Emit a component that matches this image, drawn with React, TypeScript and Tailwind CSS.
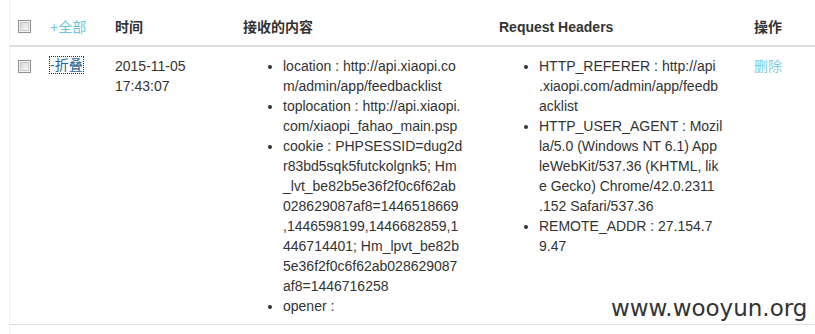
import React from "react";

const Check = () => (
  <div className="w-[13px] h-[13px] border border-[#8f8f8f] bg-[#f4f4f4] p-[1px]">
    <div className="w-full h-full border border-[#c8c8c8] bg-gradient-to-br from-[#d6d6d6] to-[#f8f8f8]" />
  </div>
);

const Lines = ({ lines }: { lines: string[] }) => (
  <>
    {lines.map((l, i) => (
      <div key={i} className="whitespace-pre">
        {l}
      </div>
    ))}
  </>
);

const col4: string[][] = [
  ["location : http://api.xiaopi.co", "m/admin/app/feedbacklist"],
  ["toplocation : http://api.xiaopi.", "com/xiaopi_fahao_main.psp"],
  [
    "cookie : PHPSESSID=dug2d",
    "r83bd5sqk5futckolgnk5; Hm",
    "_lvt_be82b5e36f2f0c6f62ab",
    "028629087af8=1446518669",
    ",1446598199,1446682859,1",
    "446714401; Hm_lpvt_be82b",
    "5e36f2f0c6f62ab028629087",
    "af8=1446716258",
  ],
  ["opener : "],
];

const col5: string[][] = [
  ["HTTP_REFERER : http://api", ".xiaopi.com/admin/app/feedb", "acklist"],
  [
    "HTTP_USER_AGENT : Mozil",
    "la/5.0 (Windows NT 6.1) App",
    "leWebKit/537.36 (KHTML, lik",
    "e Gecko) Chrome/42.0.2311",
    ".152 Safari/537.36",
  ],
  ["REMOTE_ADDR : 27.154.7", "9.47"],
];

const List = ({ items }: { items: string[][] }) => (
  <ul className="list-disc pl-[40px] m-0">
    {items.map((it, i) => (
      <li key={i}>
        <Lines lines={it} />
      </li>
    ))}
  </ul>
);

export default function App() {
  return (
    <div
      className="relative w-[815px] h-[334px] bg-white overflow-hidden text-[14px] leading-[20px] text-[#333]"
      style={{ fontFamily: '"Liberation Sans", Arial, "Noto Sans CJK SC", sans-serif' }}
    >
      <div className="absolute left-[9px] top-0 bottom-0 w-px bg-[#f2f2f2]" />
      <div className="ml-[10px] pt-[9px]">
        <div className="grid grid-cols-[32px_65px_128px_256px_255px_1fr] border-b-2 border-[#ddd]">
          <div className="p-2 pt-[11px] pb-[8px]">
            <Check />
          </div>
          <div className="p-2 text-[#6cc6dc]">+全部</div>
          <div className="p-2 font-bold">时间</div>
          <div className="p-2 font-bold">接收的内容</div>
          <div className="p-2 font-bold">Request Headers</div>
          <div className="p-2 font-bold">操作</div>
        </div>
        <div className="grid grid-cols-[32px_65px_128px_256px_255px_1fr] border-b border-[#ddd]">
          <div className="p-2 pt-[13px]">
            <Check />
          </div>
          <div className="p-2">
            <span className="text-[#2a6496] outline-1 outline-dotted outline-[#333] outline-offset-0">-折叠</span>
          </div>
          <div className="p-2 pt-[9px]">
            <div>2015-11-05</div>
            <div>17:43:07</div>
          </div>
          <div className="p-2 pt-[9px]">
            <List items={col4} />
          </div>
          <div className="p-2 pt-[9px]">
            <List items={col5} />
          </div>
          <div className="p-2 pt-[9px]">
            <span className="text-[#7ccde0]">删除</span>
          </div>
        </div>
      </div>
      <div
        className="absolute left-[611px] top-[293px] text-[23px] leading-[30px] text-[#333]"
        style={{ fontFamily: '"DejaVu Sans", Verdana, sans-serif' }}
      >
        www.wooyun.org
      </div>
    </div>
  );
}
